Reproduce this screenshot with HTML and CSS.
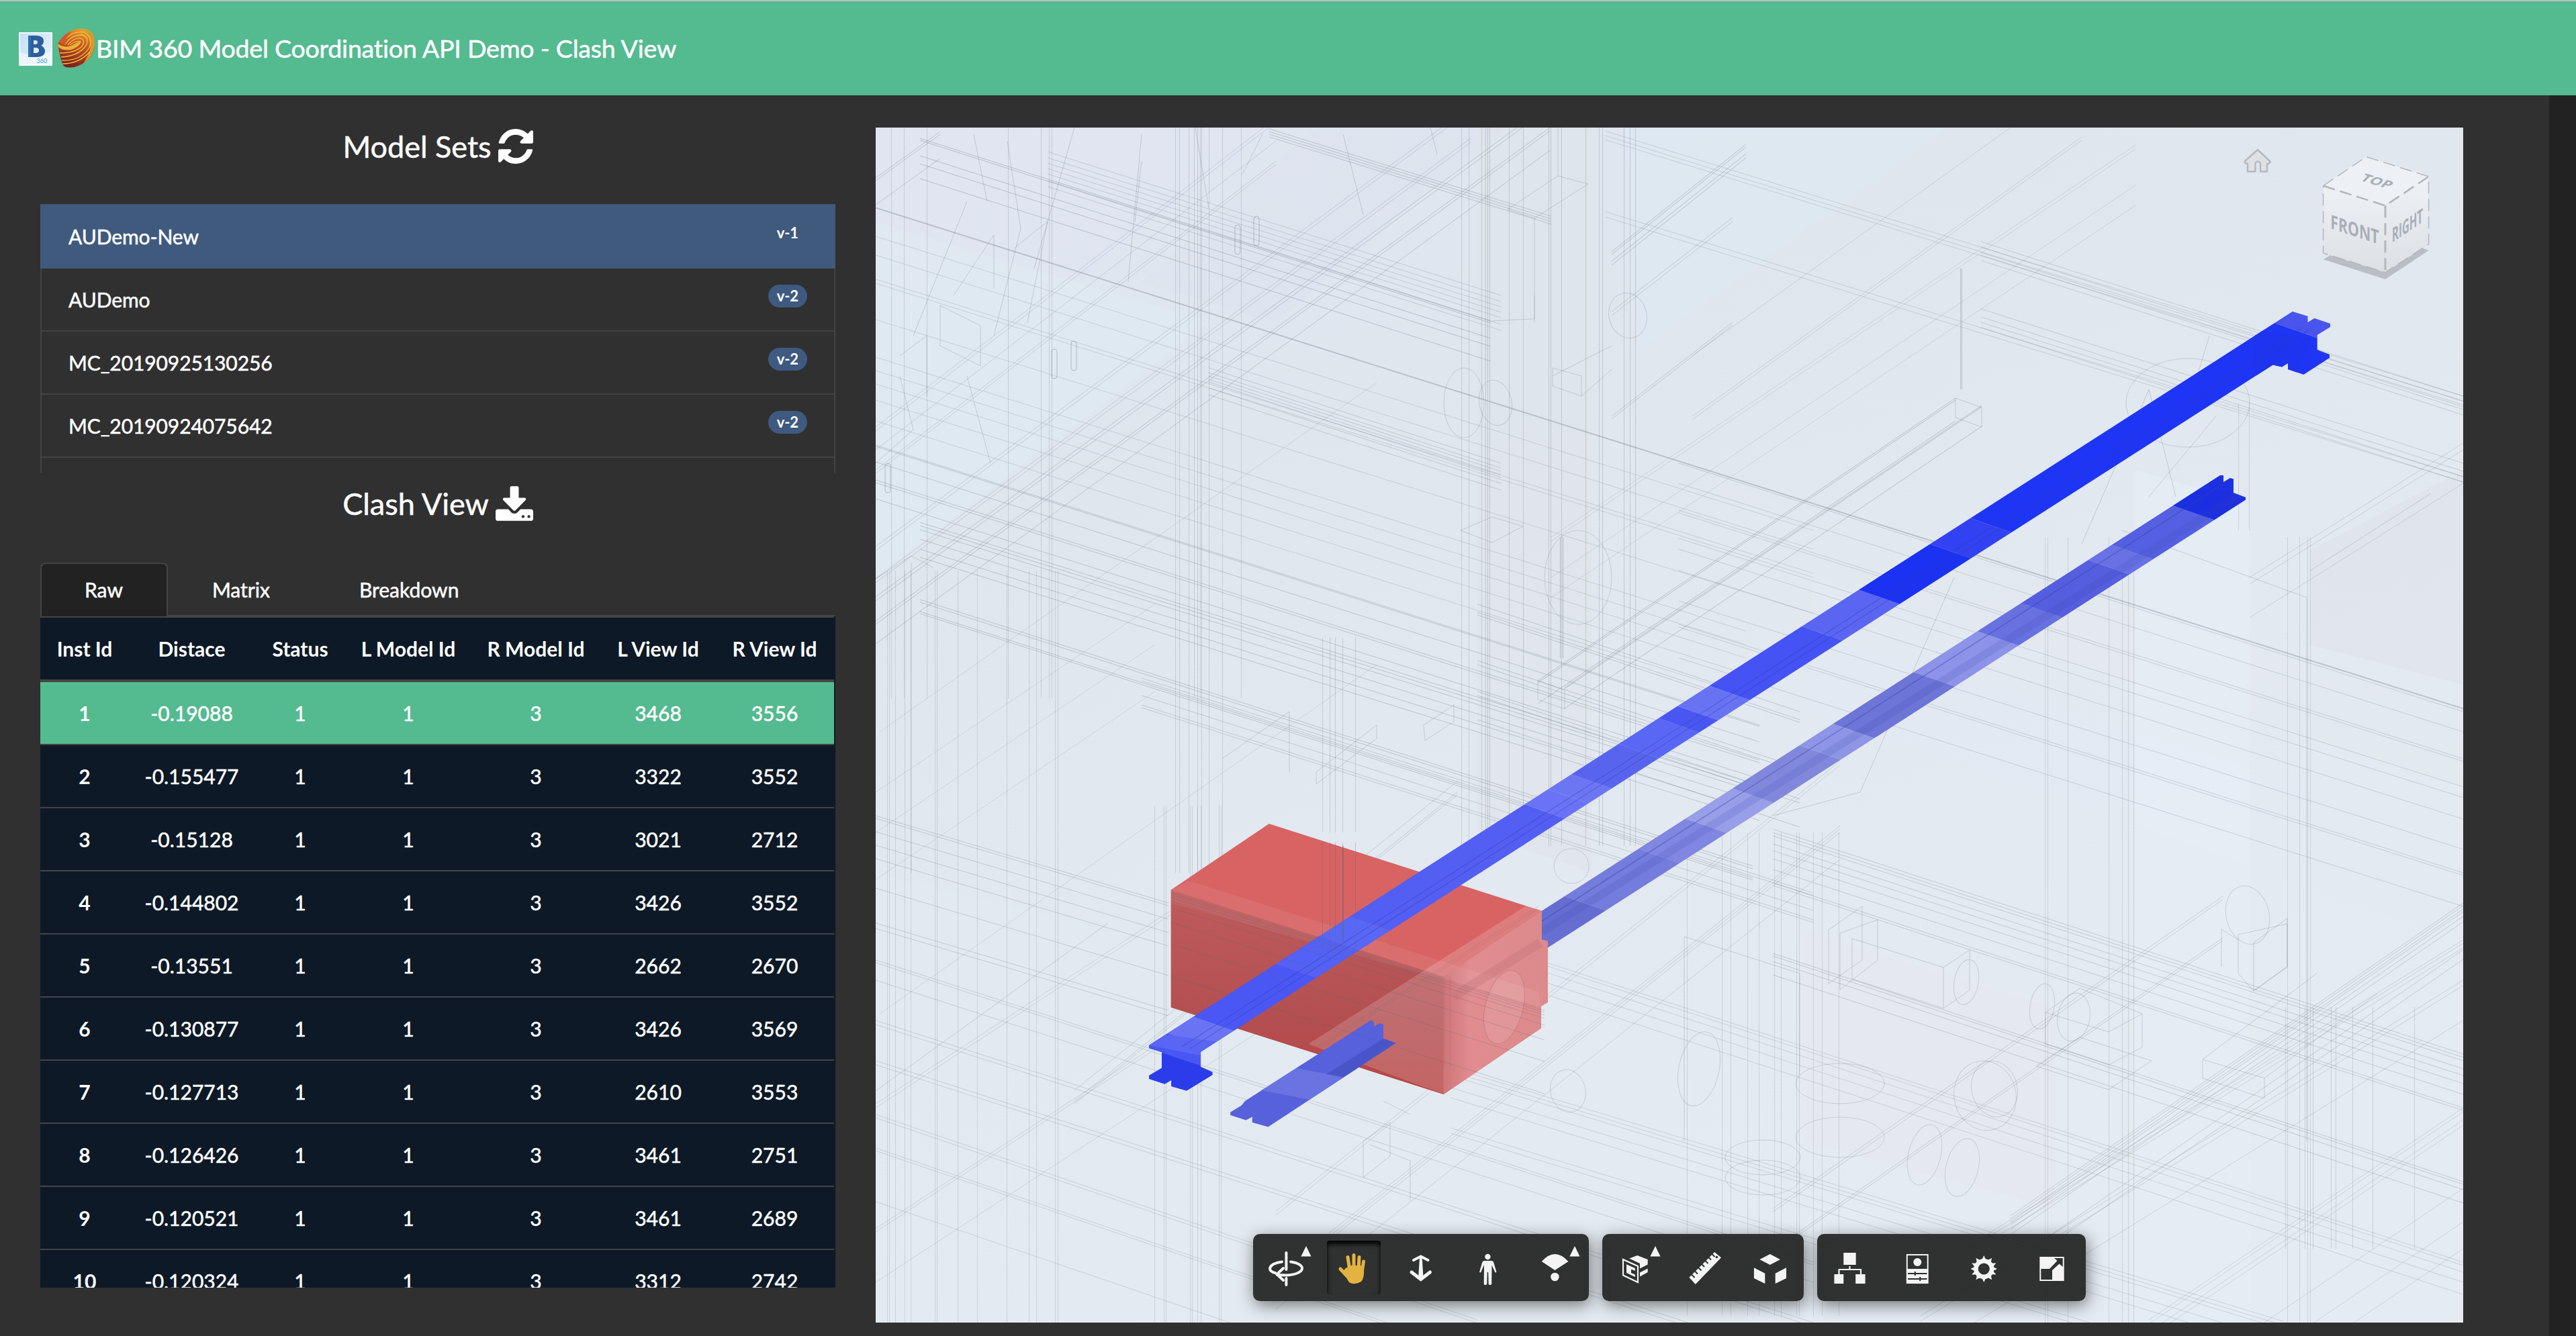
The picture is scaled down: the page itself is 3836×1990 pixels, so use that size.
FILE: index.html
```html
<!DOCTYPE html>
<html lang="en">
<head>
<meta charset="utf-8">
<title>BIM 360 Model Coordination API Demo - Clash View</title>
<link rel="stylesheet" href="styles.css">
</head>
<body>
<header class="navbar">
  <svg class="logo-bim" viewBox="0 0 50 50">
    <defs><linearGradient id="bimBg" x1="0" y1="0" x2="1" y2="1"><stop offset="0" stop-color="#c3e0f2"/><stop offset="1" stop-color="#eaf5fc"/></linearGradient></defs>
    <rect width="50" height="50" fill="#f2f9fe"/><rect x="2" y="2" width="46" height="46" fill="url(#bimBg)"/>
    <path d="M2 30q24 9 46-1v19H2z" fill="#f2f9fe" opacity=".7"/>
    <path fill-rule="evenodd" d="M14 5h11c8 0 12 3 12 8 0 4-2 6-4 7 3 1 6 4 6 8 0 6-5 9-12 9H14zm8 7v6h2c3 0 4-1 4-3s-1-3-4-3zm0 11v8h3c3 0 5-1 5-4s-2-4-5-4z" fill="#2c5d9e"/>
    <path d="M14 5h4v32h-4z" fill="#2a6fb2"/>
    <text x="26.500" y="46" class="bim-num">360</text>
  </svg>
  <svg class="logo-forge" viewBox="85 42 58 60">
    <defs><linearGradient id="forge" x1=".75" y1="0" x2=".4" y2="1"><stop offset="0" stop-color="#e9a830"/><stop offset=".4" stop-color="#c9581f"/><stop offset="1" stop-color="#7d1f1a"/></linearGradient></defs>
    <path d="M86 65Q95 49 110 44Q134 39 140 55Q145 75 130 90Q114 103 98 100Q93 98 92 92Q88 80 86 65z" fill="url(#forge)"/>
    <path d="M125 44Q141 46 141 66Q139 84 124 95Q139 72 134 56Q131 47 125 44z" fill="#d69a2b"/>
    <path d="M86 65Q96 72 106 68Q116 62 121 62Q118 70 106 74Q94 76 87 70z" fill="#e8b239"/>
    <g fill="none" stroke="#f0c244" stroke-width="1.300">
      <path d="M97 67Q105 52 122 52Q134 55 128 68Q116 84 91 85"/><path d="M101 67Q110 56 120 57Q128 60 122 69Q112 79 89 79"/><path d="M92 90Q120 91 133 71Q139 55 125 48Q108 46 98 58"/><path d="M93 95Q118 95 134 77"/>
      <path d="M104 67Q112 60 120 62"/>
    </g>
    <path d="M88 62Q94 52 106 47Q97 56 98 66Q92 67 88 62z" fill="#cf5a2a"/>
  </svg>
  <h1 class="brand">BIM 360 Model Coordination API Demo - Clash View</h1>
</header>
<main class="layout">
  <section class="side">
    <h2 class="heading">Model Sets
      <svg class="ic-refresh" viewBox="0 128 1536 1536"><path d="M1511 1056q0 5-1 7-64 268-268 434.500T764 1664q-146 0-282.500-55T238 1452l-129 129q-19 19-45 19t-45-19-19-45v-448q0-26 19-45t45-19h448q26 0 45 19t19 45-19 45l-137 137q71 66 161 102t187 36q134 0 250-65t186-179q11-17 53-117 8-23 30-23h192q13 0 22.500 9.500t9.500 22.500zm25-800v448q0 26-19 45t-45 19h-448q-26 0-45-19t-19-45 19-45l138-138Q969 384 768 384q-134 0-250 65T332 628q-11 17-53 117-8 23-30 23H50q-13 0-22.500-9.500T18 736v-7q65-268 270-434.500T768 128q146 0 284 55.500T1297 340l130-129q19-19 45-19t45 19 19 45z"/></svg>
    </h2>
    <ul class="sets">
      <li class="active"><span>AUDemo-New</span><b class="badge">v-1</b></li>
      <li><span>AUDemo</span><b class="badge">v-2</b></li>
      <li><span>MC_20190925130256</span><b class="badge">v-2</b></li>
      <li><span>MC_20190924075642</span><b class="badge">v-2</b></li>
      <li></li>
    </ul>
    <h2 class="heading clash">Clash View
      <svg class="ic-download" viewBox="0 0 1664 1536"><path d="M1280 1344q0-26-19-45t-45-19-45 19-19 45 19 45 45 19 45-19 19-45zm256 0q0-26-19-45t-45-19-45 19-19 45 19 45 45 19 45-19 19-45zm128-224v320q0 40-28 68t-68 28H96q-40 0-68-28t-28-68v-320q0-40 28-68t68-28h465l135 136q58 56 136 56t136-56l136-136h464q40 0 68 28t28 68zm-325-569q17 41-14 70l-448 448q-18 19-45 19t-45-19L339 621q-31-29-14-70 17-39 59-39h256V64q0-26 19-45t45-19h256q26 0 45 19t19 45v448h256q42 0 59 39z"/></svg>
    </h2>
    <nav class="tabs"><a class="on">Raw</a><a>Matrix</a><a>Breakdown</a></nav>
    <div class="table-wrap">
      <table class="clashes">
        <colgroup><col class="c1"><col class="c2"><col class="c3"><col class="c4"><col class="c5"><col class="c6"><col class="c7"></colgroup>
        <thead><tr><th>Inst Id</th><th>Distace</th><th>Status</th><th>L Model Id</th><th>R Model Id</th><th>L View Id</th><th>R View Id</th></tr></thead>
        <tbody>
          <tr class="picked"><th>1</th><td>-0.19088</td><td>1</td><td>1</td><td>3</td><td>3468</td><td>3556</td></tr>
          <tr><th>2</th><td>-0.155477</td><td>1</td><td>1</td><td>3</td><td>3322</td><td>3552</td></tr>
          <tr><th>3</th><td>-0.15128</td><td>1</td><td>1</td><td>3</td><td>3021</td><td>2712</td></tr>
          <tr><th>4</th><td>-0.144802</td><td>1</td><td>1</td><td>3</td><td>3426</td><td>3552</td></tr>
          <tr><th>5</th><td>-0.13551</td><td>1</td><td>1</td><td>3</td><td>2662</td><td>2670</td></tr>
          <tr><th>6</th><td>-0.130877</td><td>1</td><td>1</td><td>3</td><td>3426</td><td>3569</td></tr>
          <tr><th>7</th><td>-0.127713</td><td>1</td><td>1</td><td>3</td><td>2610</td><td>3553</td></tr>
          <tr><th>8</th><td>-0.126426</td><td>1</td><td>1</td><td>3</td><td>3461</td><td>2751</td></tr>
          <tr><th>9</th><td>-0.120521</td><td>1</td><td>1</td><td>3</td><td>3461</td><td>2689</td></tr>
          <tr><th>10</th><td>-0.120324</td><td>1</td><td>1</td><td>3</td><td>3312</td><td>2742</td></tr>
        </tbody>
      </table>
    </div>
  </section>
  <section class="viewer">
    <svg class="scene" viewBox="1304 190 2364 1780">
      <defs>
        <linearGradient id="sky" x1="0" y1="0" x2=".5" y2="1"><stop offset="0" stop-color="#e0e6f0"/><stop offset=".3" stop-color="#dfe6ee"/><stop offset=".65" stop-color="#e2e9f0"/><stop offset="1" stop-color="#e4ebf1"/></linearGradient>
        <linearGradient id="boxFront" x1="0" y1="0" x2="0" y2="1"><stop offset="0" stop-color="#c05b5c"/><stop offset=".6" stop-color="#b35052"/><stop offset="1" stop-color="#b84545"/></linearGradient>
        <linearGradient id="boxSide" x1="0" y1="0" x2="1" y2="0"><stop offset="0" stop-color="#cf7477"/><stop offset=".25" stop-color="#e08c90"/><stop offset="1" stop-color="#dc8a8c"/></linearGradient>
        <linearGradient id="face" x1="0" y1="0" x2="0" y2="1"><stop offset="0" stop-color="#eef2f6"/><stop offset="1" stop-color="#dcdfe3"/></linearGradient>
        <clipPath id="beamTop"><path d="M1711 1557L3413.800 464L3436.500 471V480L3446.600 474L3470 482V487L3450.700 499V521L3469 528V533L3430.400 558L3407 550V541L3398 546.600L3384.600 543.600L1787.600 1567V1589L1805.400 1597V1601L1767 1624.600L1744.300 1618V1608.700L1734.500 1614.400L1711.300 1607V1602L1730 1591V1567L1711 1561z"/></clipPath>
        <clipPath id="beamLow"><path d="M2296 1356.800L3306 708H3311V718L3321 712L3326 713.500V734L3344 740.700V744.500L2305 1411.600V1402L2296 1399.700z"/></clipPath>
      </defs>
      <rect x="1304" y="190" width="2364" height="1780" fill="url(#sky)"/>
      <g id="tints"></g>
      <g id="wires-back" class="wire"></g>
      <g clip-path="url(#beamLow)" id="low-bands"></g>
      <path d="M1889.800 1227L2296 1356.800V1399.700L2305 1402V1492.700L2295 1498.800V1531.600L2149.600 1630L1743.800 1500.500V1325.400z" fill="#d86363"/>
      <path d="M1743.800 1325.400L2149.600 1454.500V1630L1743.800 1500.500z" fill="url(#boxFront)"/>
      <path d="M2149.600 1454.500L2296 1356.800V1399.700L2305 1402V1492.700L2295 1498.800V1531.600L2149.600 1630z" fill="url(#boxSide)"/>
      <path d="M1948 1555L2273 1349L2296 1356.800L2149.600 1454.500V1630z" fill="#fff" opacity=".17"/>
      <path d="M1771 1312L2290 1477L2296 1500L1743.800 1345V1325.400z" fill="#fff" opacity=".07"/>
      <path d="M2165 1484L2294 1404" stroke="#b56c70" stroke-width="14" opacity=".25"/>
      <ellipse cx="2240" cy="1500" rx="28" ry="56" transform="rotate(14 2240 1500)" fill="#fff" opacity=".1"/>
      <ellipse cx="2240" cy="1500" rx="28" ry="56" transform="rotate(14 2240 1500)" fill="none" stroke="#a66" opacity=".4"/>
      <g clip-path="url(#beamTop)" id="top-bands"></g>
      <path d="M2041.600 1519.400L2046 1522V1529L2055 1524L2060 1526V1547L2078.700 1553.600L1888.500 1678.600L1864.800 1672V1663.400L1855.400 1668.500L1832.200 1661V1656.700L1848.800 1646.500L1854 1640z" fill="#5661db"/>
      <path d="M1930 1591L2000 1604L1950 1638L1878 1624z" fill="#7b83e8" opacity=".55"/>
      <path d="M2060 1547L2078.700 1553.600L2000 1605L1975 1600z" fill="#3a45b4" opacity=".45"/>
      <g id="wires-front" class="wire"></g>
      <path d="M3460 386.600L3552 416L3616.600 373L3606 369L3552 400L3470 380z" fill="#b9bec4"/>
      <path d="M3459.600 276.800L3523.700 233.600L3616.600 263L3552 306.300z" fill="#edf1f5"/>
      <path d="M3459.600 276.800L3552 306.300V405.800L3459.600 377z" fill="url(#face)"/>
      <path d="M3552 306.300L3616.600 263V363.700L3552 405.800z" fill="url(#face)"/>
      <g class="cube-edges">
        <path d="M3459.600 276.800L3552 306.300L3616.600 263" stroke-width="2.500"/><path d="M3552 306.300V405.800" stroke-width="3"/>
        <path d="M3459.600 276.800L3523.700 233.600L3616.600 263V363.700L3552 405.800L3459.600 377z" stroke-width="1.500"/>
      </g>
      <g class="cube-text">
        <text transform="matrix(.82 .27 0 1.100 3506.500 352)">FRONT</text>
        <text transform="matrix(.58 -.39 0 1.120 3585 346)">RIGHT</text>
        <text transform="matrix(.84 .25 -.5 .54 3535 275)">TOP</text>
      </g>
      <path class="home" d="M3362 223L3381 241L3378 244H3376V255.500H3366V243Q3362 238 3358.500 243V255.500H3347V244L3343 242.500V240z"/>
    </svg>
    <div class="toolbar">
      <div class="group">
        <svg viewBox="0 0 100 100"><path d="M49.400 28V53M49.400 66V76" class="ln w4"/><path d="M43 41.500C20 45 22 56 33 58M56 41.500C81 45 78 60 50 61.500L36 61M45 51L35.500 60L45 69" class="ln w4"/><path d="M79 18l7.500 15.500H71.400z"/></svg>
        <svg viewBox="10 10 80 80" class="pressed"><path d="M38 51L45 47H60L65 50Q66 66 61 71Q51 77 43 72Q38 65 34 55z"/><path d="M30 52L39 62M41 34.500L44 54M50 31.500V54M58 34.500L57 54M64.500 41L62 58" class="ln w5"/></svg>
        <svg viewBox="0 0 100 100"><path d="M39 39L49.800 33.500L60.500 39" class="ln w4"/><path d="M48 35h3.600l2 32h-7.600z"/><path d="M36 57L49.800 67.500L63.500 57" class="ln w5"/></svg>
        <svg viewBox="0 0 100 100"><circle cx="49.400" cy="34" r="4.200"/><path d="M44 40h11.500q2 0 3 3l4 14-2 .6-5-11-.3 28.400q-2.500 2-4.500 0l-.5-18h-1.500l-.5 18q-2.500 2-4.500 0L44 46l-5 11.500-2-.5 4-14q1-3 3-3z"/></svg>
        <svg viewBox="0 0 100 100"><path d="M29.800 41Q49.400 19 69.400 41L49.400 54z"/><circle cx="49.400" cy="64" r="6.200"/><path d="M79 18l7.500 15.500H71.400z"/></svg>
      </div>
      <div class="group">
        <svg viewBox="0 0 100 100"><path d="M31 38L53 48V72L31 61.500z" class="ln w2"/><path d="M36 45.300L48.800 51V55L43 52.500V58L48.800 60.500V64L36 58zM40.300 36.500L52.200 32L67.700 38V45.500L56 51.500V44zM56 57.500L67.700 51.500V57L56 63.500z"/><path d="M79 18l7.500 15.500H71.400z"/></svg>
        <svg viewBox="0 0 100 100"><path d="M67.200 27L77 35.300L38.800 75L29.400 64.700z"/><path d="M33 60.500l4.500 4.500M38 55.500l4 4M43 50l4.500 4.500M48 45l4 4M53 39.500l4.500 4.500M58 34.500l4 4M63 29.500l4.500 4.500" class="cut"/><circle cx="70.500" cy="34.500" r="1.800" fill="#2d2e2e"/></svg>
        <svg viewBox="0 0 100 100"><path d="M49.800 30L65 38L49.800 46L34.300 38zM25.900 50.300L42.300 58.700V74L25.900 66zM57.700 58.700L74 50.300V66L57.700 74z"/></svg>
      </div>
      <div class="group">
        <svg viewBox="0 0 100 100"><path d="M39.300 28H57.700V46H39.300zM25.400 60H39.300V74H25.400zM57.200 60H71.600V74H57.200z"/><path d="M48.500 48V53M32.500 60V53H65V60" class="ln w2"/></svg>
        <svg viewBox="0 0 100 100"><path fill-rule="evenodd" d="M32.800 30H65.700V74H32.800zM34.800 32V52H63.700V32z"/><circle cx="49.300" cy="42" r="6"/><path d="M35 59H63.500M35 67H63.500M45.800 56V62M53.300 64V70" class="cut"/></svg>
        <svg viewBox="0 0 100 100"><circle cx="48.300" cy="52" r="11.800" fill="none" stroke="#f4f4f4" stroke-width="6.500"/><path d="M45.500 38L48.300 32L51 38zM45.500 66L48.300 72L51 66zM34.500 49L28.500 52L34.500 55zM62 49L68 52L62 55z"/><g id="teeth"><path d="M45.500 38L48.300 32L51 38z" transform="rotate(36 48.300 52)"/><path d="M45.500 38L48.300 32L51 38z" transform="rotate(65 48.300 52)"/><path d="M45.500 38L48.300 32L51 38z" transform="rotate(115 48.300 52)"/><path d="M45.500 38L48.300 32L51 38z" transform="rotate(144 48.300 52)"/><path d="M45.500 38L48.300 32L51 38z" transform="rotate(-36 48.300 52)"/><path d="M45.500 38L48.300 32L51 38z" transform="rotate(-65 48.300 52)"/><path d="M45.500 38L48.300 32L51 38z" transform="rotate(-115 48.300 52)"/><path d="M45.500 38L48.300 32L51 38z" transform="rotate(-144 48.300 52)"/></g></svg>
        <svg viewBox="0 0 100 100"><path fill-rule="evenodd" d="M31.300 34H67.700V70H31.300zM33.300 52V68H50V54L60.500 44.500L65.700 49V36H53L57.500 40L46 52z"/></svg>
      </div>
    </div>
  </section>
</main>
<script src="scene.js"></script>
</body>
</html>
```
FILE: styles.css
```css
* { box-sizing: border-box; }
body { margin: 0; width: 3836px; height: 1990px; overflow: hidden; background: #303030; color: #fff; font: 30px/44px Lato, sans-serif; font-variant-ligatures: none; -webkit-text-stroke: .5px #fff; }
svg text { -webkit-text-stroke: 0; }
h1, h2, ul { margin: 0; padding: 0; font-weight: 400; }

.navbar { height: 142px; background: #54ba90; border-top: 2px solid #bdbdbd; display: flex; align-items: flex-start; padding: 40px 0 0 28px; }
.logo-bim { width: 50px; height: 50px; margin-top: 6px; }
.logo-forge { width: 58px; height: 60px; margin: 0 0 0 7px; }
.bim-num { font: 9px Lato, sans-serif; fill: #3f9bd8; }
.brand { font-size: 37.5px; letter-spacing: -.2px; line-height: 56px; margin-top: 2px; white-space: nowrap; }

.layout { display: flex; height: 1848px; padding: 0 128px 0 60px; border-right: 40px solid #222; }
.side { width: 1184px; flex: none; }
.heading { display: flex; justify-content: center; align-items: center; gap: 10px; height: 162px; padding-bottom: 10px; font-size: 45px; line-height: 60px; }
.heading svg { fill: #fff; height: 52px; }
.ic-refresh { width: 52px; }
.ic-download { width: 56px; }
.sets { list-style: none; height: 400px; overflow: hidden; flex: none; }
.sets li { display: flex; justify-content: space-between; align-items: flex-start; height: 94px; padding: 24px 40px 0; border: 2px solid #444; border-top: 0; letter-spacing: -.1px; }
.sets li.active { height: 96px; padding-top: 26px; background: #3f5a7c; border-color: #3f5a7c; }
.badge { height: 34px; padding: 0 13px; border-radius: 17px; background: #3e5a80; font-size: 22px; line-height: 34px; -webkit-text-stroke: 0; }
.active .badge { background: none; }
.clash { height: 134px; padding: 0 0 42px; }

.tabs { display: flex; height: 80px; border-bottom: 2px solid #444; }
.tabs a { height: 80px; padding: 16px 65px 0 64px; border: 2px solid transparent; border-bottom: 0; }
.tabs .on { background: #222; border-color: #444; border-radius: 8px 8px 0 0; }
.table-wrap { flex: none; height: 1000px; overflow: hidden; background: #0d1926; }
.clashes { table-layout: fixed; width: 1182px; border-collapse: separate; border-spacing: 0; text-align: center; }
.clashes th, .clashes td { height: 94px; padding: 0; border-top: 2px solid #444; font-weight: 400; line-height: 44px; }
.clashes th { font-weight: 700; -webkit-text-stroke: 0; }
.clashes thead th { height: 98px; border-bottom: 4px solid #444; }
.clashes .picked > * { height: 92px; border-top: 0; background: #54ba90; }
.c1 { width: 132px; } .c2 { width: 187px; } .c3 { width: 136px; } .c4 { width: 186px; } .c5 { width: 194px; } .c6 { width: 170px; } .c7 { width: 177px; }

.viewer { position: relative; width: 2364px; height: 1780px; margin: 48px 0 0 60px; flex: none; overflow: hidden; }
.scene { display: block; width: 2364px; height: 1780px; }
.wire { fill: none; stroke: #5d6570; }
.cube-edges { fill: none; stroke: #b3b7bc; stroke-dasharray: 18 8; }
.cube-text { font: 700 26px "Open Sans", sans-serif; fill: #a9afb8; text-anchor: middle; }
.home { fill: #dfe2e4; stroke: #b6babe; stroke-width: 2.5; stroke-linejoin: round; }

.toolbar { position: absolute; left: 562px; bottom: 32px; display: flex; gap: 20px; }
.group { display: flex; height: 100px; border-radius: 10px; background: rgba(41, 42, 42, .97); box-shadow: 2px 6px 24px rgba(0, 0, 0, .5); }
.group svg { width: 100px; height: 100px; fill: #f4f4f4; stroke: none; }
.group .ln { fill: none; stroke: #f4f4f4; stroke-linecap: round; stroke-linejoin: miter; }
.group .w2 { stroke-width: 2.2; stroke-linecap: butt; }
.group .w4 { stroke-width: 4; }
.group .w5 { stroke-width: 5; }
.group .cut { fill: none; stroke: #2d2e2e; stroke-width: 2; }
.group .pressed { width: 80px; height: 80px; margin: 10px; border-radius: 4px; box-shadow: inset 0 5px 7px #000; fill: #e3b341; }
.group .pressed .ln { stroke: #e3b341; }
```
FILE: scene.js
```js
const NS = "http://www.w3.org/2000/svg";
const add = (id, tag, attrs) => {
  const el = document.createElementNS(NS, tag);
  for (const k in attrs) el.setAttribute(k, attrs[k]);
  document.getElementById(id).appendChild(el);
};

// Translucent surfaces seen through the model
[
  ["1304,190 1900,190 1500,500 1304,440", "#dfe4f1", .6],
  ["1304,330 1800,480 1304,860", "#dfebf3", .6],
  ["1960,190 2240,190 1900,480 1700,420", "#dde1ef", .5],
  ["2200,190 2370,190 2370,1300 2200,1240", "#dfe3ea", .5],
  ["2420,190 2900,190 2440,520", "#dde9f3", .6],
  ["2560,720 3668,1060 3668,1240 2560,900", "#e4eaec", .55],
  ["2700,860 3668,1170 3668,1400 2700,1060", "#e3e9f3", .5],
  ["3180,700 3350,750 3350,1970 3180,1970", "#e6eef7", .6],
  ["2690,1390 3060,1500 3060,1800 2690,1700", "#e6e8ee", .7],
  ["3440,820 3668,700 3668,1020 3440,960", "#e0e2ea", .6],
  ["1304,1300 1700,1400 1700,1970 1304,1970", "#e2ebf1", .6],
  ["1900,1650 2400,1500 2600,1970 1800,1970", "#e4ebf0", .6]
].forEach(([points, fill, opacity]) => add("tints", "polygon", { points, fill, opacity }));

// Parallel edges: start, end and the offset of each edge in y (in x for verticals)
const family = (id, x1, y1, x2, y2, offs, o) => {
  const vert = x1 === x2;
  const d = offs.map(k => vert ? `M${x1 + k} ${y1}V${y2}` : `M${x1} ${y1 + k}L${x2} ${y2 + k}`).join("");
  add(id, "path", { d, "stroke-opacity": o });
};
const B = "wires-back", F = "wires-front";

// edges falling to the right
family(B, 1304, 309, 3668, 1055, [0, 1], .3);
family(B, 1304, 352, 2700, 790, [0, 28, 64, 70, 124], .2);
family(B, 1304, 532, 2600, 940, [0, 20, 40, 64, 95], .2);
family(B, 1304, 663, 2620, 1080, [0, 2, 25, 52, 56, 80], .28);
family(B, 1370, 206, 2220, 478, [0, 3, 26, 38, 60], .3);
family(B, 1560, 226, 2235, 440, [0, 9, 17, 25, 33, 43, 52], .22);
family(B, 1890, 192, 2310, 322, [0, 4, 8, 12], .28);
family(B, 1800, 548, 2235, 690, [0, 7, 12, 17, 21, 30, 40], .24);
family(B, 1370, 778, 2620, 1170, [0, 5, 11, 25, 40, 52], .28);
family(B, 1370, 893, 2610, 1290, [0, 4, 18, 21], .28);
family(B, 2390, 195, 3668, 590, [0, 7, 13, 120, 128], .2);
family(B, 2950, 360, 3668, 590, [0, 8, 16, 20, 28, 100, 112, 120, 128], .22);
family(B, 2500, 690, 3668, 1060, [0, 30, 70, 74, 112, 128, 160, 205, 240, 244, 290], .22);
family(B, 2640, 1235, 3668, 1570, [0, 5, 10, 22, 32, 44, 60, 80, 84], .24);
family(B, 2640, 1420, 3668, 1760, [0, 4, 12, 32], .26);
family(B, 2200, 1400, 3668, 1880, [0, 5, 15, 30, 48], .2);
family(B, 2160, 1590, 3400, 1968, [0, 6, 12, 30, 45, 90, 98], .2);
family(B, 1304, 1215, 1740, 1345, [0, 4, 24, 44, 64, 108, 160, 168], .24);
family(B, 1304, 1430, 2700, 1880, [0, 4, 30, 90, 96, 150, 156], .22);
family(B, 1304, 1660, 2200, 1966, [0, 5, 50, 54, 130], .2);
family(B, 1700, 1010, 2700, 1330, [0, 4, 26, 40, 44], .24);
family(B, 2200, 900, 2680, 1060, [0, 12, 16, 84, 90, 130, 136, 172], .26);

// edges rising to the right
family(B, 1304, 925, 2308, 190, [0, 5, -30, -36, 34], .28);
family(B, 1304, 862, 2190, 206, [0, 6, -42, -48], .22);
family(B, 1304, 700, 1900, 240, [0, 5, -30, -58, -64], .2);
family(B, 1304, 265, 1400, 196, [0, 4, 40], .25);
family(B, 1310, 1090, 2050, 570, [0, 420], .16);
family(B, 2290, 1014, 2912, 593, [0, 3, 34], .3);
family(B, 2330, 1024, 2951, 604, [0, 2, 31], .3);
family(B, 2310, 800, 3180, 216, [0, 6, 60, 90], .16);
family(B, 2520, 620, 3100, 204, [0, 5, -90], .18);
family(B, 2400, 620, 2580, 480, [0, 4, -150, -156], .24);
family(B, 2400, 375, 2600, 215, [0, 4, 14, 20], .3);
family(B, 2994, 1811, 3668, 1345, [0, 4, 9, 13, 20, 28, 70, 84], .24);
family(B, 2860, 1900, 3668, 1400, [0, 5, 12, 60, 68, 120], .2);
family(B, 3200, 1966, 3668, 1650, [0, 6, 18, 26, 120, 170, 210], .18);
family(B, 2640, 1800, 3310, 1335, [0, 5, 62, 66], .22);
family(B, 1304, 1180, 1720, 900, [0, 60, 130], .15);
family(B, 1304, 1830, 1900, 1440, [0, 5, -180, -186, 80], .18);
family(B, 1600, 1640, 2170, 1180, [0, 4, -16], .22);
family(B, 1900, 1900, 2740, 1230, [0, 5, 10, -90, -96, 50], .2);
family(B, 3350, 860, 3668, 660, [0, 10, 60], .2);

// uprights
family(B, 1300.5, 190, 1300.5, 1040, [27, 46, 80, 201, 250, 262, 266, 478, 487, 548], .2);
family(B, 1300.5, 190, 1300.5, 1300, [450, 456, 470, 483, 489, 500, 520, 876, 887, 906], .2);
family(B, 1300.5, 850, 1300.5, 1970, [21, 24, 33, 47, 56, 92, 95, 126, 155, 199, 232, 243, 271, 275], .18);
family(B, 1300.5, 190, 1300.5, 1260, [912, 915, 918, 947, 968, 1006, 1009, 1025, 1061, 1081, 1086, 1118, 1127, 1135], .24);
family(B, 1700.5, 1200, 1700.5, 1970, [19, 33, 36, 72, 75, 83, 88, 115, 118], .18);
family(B, 1900.5, 950, 1900.5, 1240, [69, 80, 88, 99, 118], .22);
family(B, 2500.5, 1240, 2500.5, 1960, [12, 64, 77, 102, 119, 142, 152, 175, 179, 200, 213, 238], .18);
family(B, 3000.5, 800, 3000.5, 1970, [45, 49, 79, 140, 160, 169, 177, 406, 424, 436, 440], .18);
family(B, 3400.5, 1500, 3400.5, 1860, [3, 32, 44, 71, 78, 103, 133, 195], .2);
family(B, 2919.5, 400, 2919.5, 580, [0, 2], .3);
family(B, 3333.5, 600, 3333.5, 790, [0, 16], .18);
family(B, 2323.5, 800, 2323.5, 980, [0, 4], .35);

// fittings, ducts and equipment outlines
[
  "M2912 593L2951 607V636L2912 622zM2290 1014L2330 1028V1056L2290 1042zM1389 845L1357 828L1304 862M1357 838V1300",
  "M2320 262L2365 274L2285 325L2245 312zM2320 262V190M2285 325V480M2222 478L2285 475V440M2175 790L2222 770L2268 784L2222 808z",
  "M2312 548L2355 560V590L2312 575zM2312 560L2400 515M2355 590L2400 550M2120 1080l45-30v25l-43 28z",
  "M2723 1385l50-35v80l-50 35zM2740 1390l56-20v60l-56 44zM2758 1398L2894 1441V1502L2758 1458zM2894 1441L2933 1415V1475L2894 1502",
  "M3032 1588L3140 1623L3204 1580L3097 1545zM3046 1508L3140 1537L3190 1510V1560L3140 1586L3046 1555zM3046 1508L3097 1472L3190 1510",
  "M3280 1578L3372 1606V1636L3280 1606zM3280 1578L3450 1450M3372 1606L3540 1480",
  "M3333 1392L3406 1376V1440L3356 1476L3333 1450zM3356 1404L3406 1368V1440L3356 1476zM3333 1400L3308 1384V1440",
  "M2508 1395L2680 1450V1600M2508 1395V1700M3160 790L3435 890V1700M3440 850L3620 735",
  "M2030 1700l40-28v50l-40 32zM2040 1705l60 24v60M2060 1640l40 20M1650 1375l-346 250M1820 1130L1920 1060V1150",
  "M1960 1150l90-70v20l-90 68zM1440 300L1400 400L1360 500M1450 200L1470 300M1600 190L1540 400M2000 200L2030 320M1880 200L1850 260",
  "M1500 210L1520 340L1480 500M1700 200L1680 420M1780 190L1800 310M1304 690L1360 640L1340 560M1440 560L1475 690M2130 190L2140 230",
  "M1400 455v60l60 30v-60zM1340 530L1380 500V590M1420 440L1480 350V430M1510 370L1560 330L1530 480M1700 240L1690 330",
  "M2640 1215L2770 1180L2910 860M3260 600L3290 500M3100 810L3200 580L3240 740M3300 620L3200 740"
].forEach(d => add(B, "path", { d, "stroke-opacity": .24 }));
[
  [2180, 600, 30, 52], [2227, 600, 24, 34, -12], [2424, 470, 28, 34, -15], [3258, 600, 92, 66],
  [2740, 1614, 66, 30], [2740, 1694, 66, 30], [2625, 1724, 56, 26], [2625, 1754, 56, 26], [2956, 1632, 46, 52, -14],
  [2970, 1622, 34, 42, -14], [2866, 1720, 24, 46, 14], [2922, 1739, 24, 44, 14], [2928, 1463, 18, 34, 10], [3041, 1499, 18, 34, 10],
  [3088, 1515, 24, 36, 10], [2530, 1592, 30, 56, 12], [2335, 1625, 26, 32, -14], [2340, 1290, 26, 26],
  [2350, 860, 50, 70], [3347, 1363, 32, 44, -14]
].forEach(([cx, cy, rx, ry, a = 0]) => add(B, "ellipse", { cx, cy, rx, ry, transform: `rotate(${a} ${cx} ${cy})`, "stroke-opacity": .22 }));

// hanger rods
[[1839, 335], [1867, 322], [1566, 520], [1595, 508], [1318, 690]].forEach(([x, y]) =>
  add(B, "rect", { x, y, width: 8, height: 44, rx: 4, "stroke-opacity": .35 }));

// Beam colours: each entry is the x on the upper edge where the colour begins
const bands = (id, x0, y0, stops) => {
  stops.forEach(([x, fill], i) => {
    const y = y0 - (x - x0) * .642;
    const n = (stops[i + 1] || [3600])[0], ny = y0 - (n - x0) * .642;
    add(id, "polygon", { points: `${x - 40},${y - 14} ${x + 220},${y + 77} ${n + 221},${ny + 77} ${n - 40},${ny - 14}`, fill });
  });
};
add("top-bands", "rect", { x: 1700, y: 1500, width: 160, height: 130, fill: "#1f33e6" });
bands("top-bands", 1711, 1557, [
  [1640, "#4957f2"], [1738, "#6a73f3"], [1778, "#4a58f4"], [1900, "#5461f4"], [1965, "#5a67f5"], [2010, "#535ff2"], [2270, "#6a74f5"],
  [2305, "#6d77f2"], [2340, "#5a64ee"], [2410, "#5b68f4"], [2470, "#4a57f2"], [2498, "#6973f4"],
  [2545, "#4553f4"], [2683, "#5b66f2"], [2768, "#1d33f2"], [2874, "#3343f2"], [2934, "#1f36f5"], [3387, "#4955ec"]
]);
add("top-bands", "path", { d: "M1700 1556l30 12l60 20v-21L1805 1556V1640H1700z", fill: "#2638ea", opacity: .85 });
add("top-bands", "path", { d: "M1711 1557L1735 1541L1815 1552L1787 1572z", fill: "#5a66f3" });
add("top-bands", "path", { d: "M3384 546L3441 504L3418 560zM3355 490L3441 506L3441 510L3360 560z", fill: "#1f35ef" });
bands("low-bands", 2296, 1356.8, [
  [2200, "#686fd2"], [2330, "#757ddb"], [2440, "#8188e2"], [2510, "#989ee8"], [2580, "#8289dc"],
  [2680, "#8f96e6"], [2730, "#6f77d6"], [2850, "#8d93e8"], [2945, "#6a72e0"], [3010, "#5660df"], [3110, "#6a73e4"], [3145, "#5661e2"], [3236, "#1d31e2"]
]);

// Flange lines along the beams
add("top-bands", "path", { d: "M1760 1559L3428 488M1772 1562L3438 492", stroke: "#2b37a8", "stroke-width": 1.2, opacity: .35 });
add("low-bands", "path", { d: "M2296 1372L3318 716", stroke: "#3440a5", "stroke-width": 1.5, opacity: .4 });
add("low-bands", "path", { d: "M2296 1388L3335 737", stroke: "#3a44b0", "stroke-width": 12, opacity: .15 });

// Edges that cross in front of the clashing objects
family(F, 1744, 1330, 2300, 1505, [0, 3, 7, 12, 22, 44, 76, 124], .25);
family(F, 1969.5, 1255, 1969.5, 1415, [0, 11, 19, 30, 49], .3);
family(F, 1999.5, 1260, 1999.5, 1400, [0, 1], .4);
family(F, 1960, 1560, 2290, 1350, [0, 4], .2);
family(F, 2150.5, 1455, 2150.5, 1590, [0, 9], .2);
```
